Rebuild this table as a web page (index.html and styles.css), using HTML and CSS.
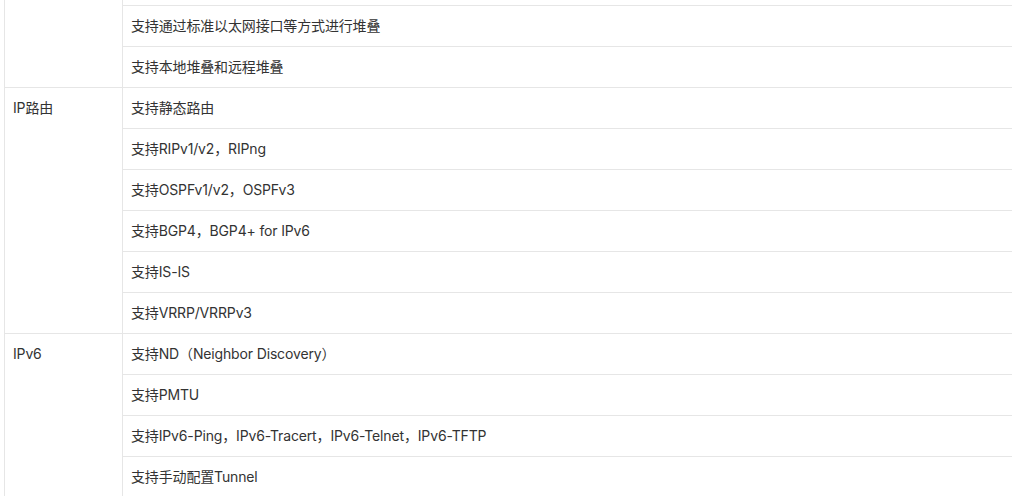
FILE: index.html
```html
<!DOCTYPE html>
<html lang="zh-CN">
<head>
<meta charset="utf-8">
<title>规格</title>
<link rel="stylesheet" href="styles.css">
</head>
<body>
<div class="viewport">
<table class="spec">
  <tbody>
    <tr class="stub"><td class="cat" rowspan="3"></td><td></td></tr>
    <tr><td>支持通过标准以太网接口等方式进行堆叠</td></tr>
    <tr><td>支持本地堆叠和远程堆叠</td></tr>
    <tr><td class="cat" rowspan="6">IP路由</td><td>支持静态路由</td></tr>
    <tr><td>支持RIPv1/v2，RIPng</td></tr>
    <tr><td>支持OSPFv1/v2，OSPFv3</td></tr>
    <tr><td>支持BGP4，BGP4+ for IPv6</td></tr>
    <tr><td>支持IS-IS</td></tr>
    <tr><td>支持VRRP/VRRPv3</td></tr>
    <tr><td class="cat" rowspan="4">IPv6</td><td>支持ND（Neighbor Discovery）</td></tr>
    <tr><td>支持PMTU</td></tr>
    <tr><td>支持IPv6-Ping，IPv6-Tracert，IPv6-Telnet，IPv6-TFTP</td></tr>
    <tr><td>支持手动配置Tunnel</td></tr>
  </tbody>
</table>
</div>
</body>
</html>
```
FILE: styles.css
```css
html, body {
  margin: 0;
  padding: 0;
  background: #fff;
  overflow: hidden;
}
.viewport {
  height: 496px;
  overflow: hidden;
  padding-left: 4px;
}
.spec {
  width: 1100px;
  border-collapse: collapse;
  border-top: none;
  font-family: "Inter", "Noto Sans CJK SC", sans-serif;
  font-size: 14px;
  letter-spacing: -0.15px;
  color: #333;
}
.spec td {
  border: 1px solid #e6e6e6;
  padding: 10px 8px;
  line-height: 20px;
  vertical-align: top;
  text-align: left;
}
.spec td.cat {
  width: 101px;
}
.spec .stub td {
  border-top: none;
  padding: 0;
  height: 5px;
}
```
